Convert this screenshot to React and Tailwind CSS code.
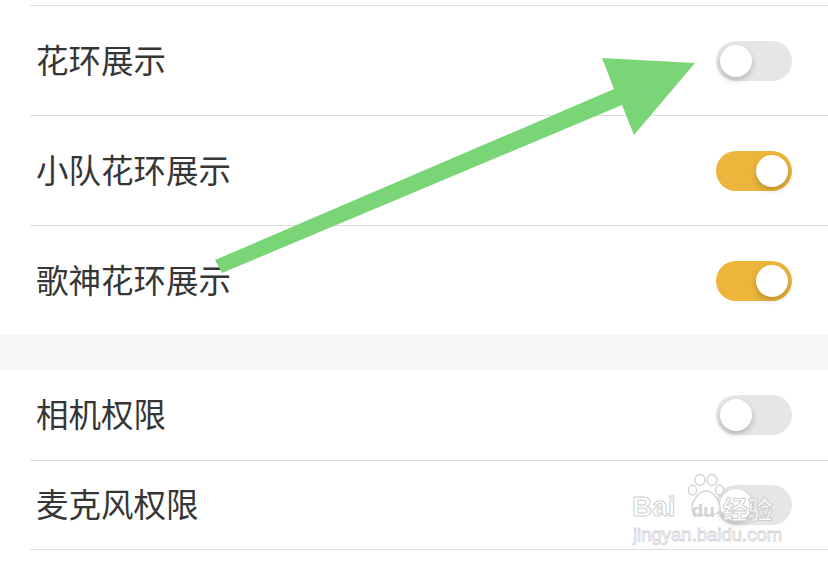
import React from 'react';

const rowsTop = [
  { label: '花环展示', on: false },
  { label: '小队花环展示', on: true },
  { label: '歌神花环展示', on: true },
];

function Toggle({ on }) {
  return (
    <div
      className={`w-[76px] h-[40px] rounded-full flex items-center px-[4px] ${
        on ? 'bg-[#ecb63c] justify-end' : 'bg-[#e6e6e6] justify-start'
      }`}
    >
      <div className="w-[32px] h-[32px] rounded-full bg-white shadow-[0_3px_6px_rgba(0,0,0,0.22)]" />
    </div>
  );
}

function Row({ label, on, className = '' }) {
  return (
    <div className={`ml-[30px] pr-[36px] flex items-center justify-between border-[#dcdcdc] ${className}`}>
      <span className="pl-[6px] pb-[3px] text-[32.5px] text-[#363636] leading-none">{label}</span>
      <Toggle on={on} />
    </div>
  );
}

export default function App() {
  return (
    <div
      className="relative w-[828px] h-[564px] overflow-hidden bg-white"
      style={{ fontFamily: '"Noto Sans CJK SC", "Noto Sans", sans-serif' }}
    >
      <div className="h-[5px]" />
      {rowsTop.map((r) => (
        <Row key={r.label} label={r.label} on={r.on} className="h-[110px] border-t" />
      ))}
      <div className="h-[35px] bg-[#f6f6f6]" />
      <Row label="相机权限" on={false} className="h-[90px]" />
      <Row label="麦克风权限" on={false} className="h-[90px] border-t border-b" />

      {/* green arrow */}
      <svg className="absolute left-0 top-0" width="828" height="564" viewBox="0 0 828 564">
        <polygon
          points="215,260 614,89 602,58 695,63 634,135 622,105 222,273"
          fill="#7ad576"
        />
      </svg>

      {/* watermark */}
      <div className="absolute left-[630px] top-[472px] w-[160px] h-[76px]">
        <svg className="absolute left-[58px] top-[2px]" width="36" height="42" viewBox="0 0 36 42">
          <g fill="rgba(255,255,255,0.85)" stroke="#d2d2d2" strokeWidth="1.3">
            <ellipse cx="12" cy="6" rx="5" ry="5.5" />
            <ellipse cx="24" cy="6" rx="5" ry="5.5" />
            <ellipse cx="4.5" cy="16" rx="4" ry="5" />
            <ellipse cx="31.5" cy="16" rx="4" ry="5" />
            <path d="M18 17 C10 17 4 28 4 34 C4 40 10 41 18 41 C26 41 32 40 32 34 C32 28 26 17 18 17 Z" />
          </g>
        </svg>
        <div
          className="absolute left-[2px] top-[21px] flex items-end text-[28px] font-bold leading-none text-white/85 [-webkit-text-stroke:1px_#cfcfcf]"
          style={{ fontFamily: '"Liberation Sans", "Noto Sans CJK SC", sans-serif' }}
        >
          <span>Bai</span>
          <span className="ml-[16px] text-[19px] mb-[1px] text-[#d2d2d2] [-webkit-text-stroke:0px]">du</span>
          <span className="ml-[8px] text-[25px]" style={{ fontFamily: '"Noto Sans CJK SC", sans-serif' }}>经验</span>
        </div>
        <div
          className="absolute left-[3px] top-[54px] text-[18.5px] leading-none text-white/85 [-webkit-text-stroke:0.8px_#d2d2d2]"
          style={{ fontFamily: '"Liberation Sans", sans-serif' }}
        >
          jingyan.baidu.com
        </div>
      </div>
    </div>
  );
}
